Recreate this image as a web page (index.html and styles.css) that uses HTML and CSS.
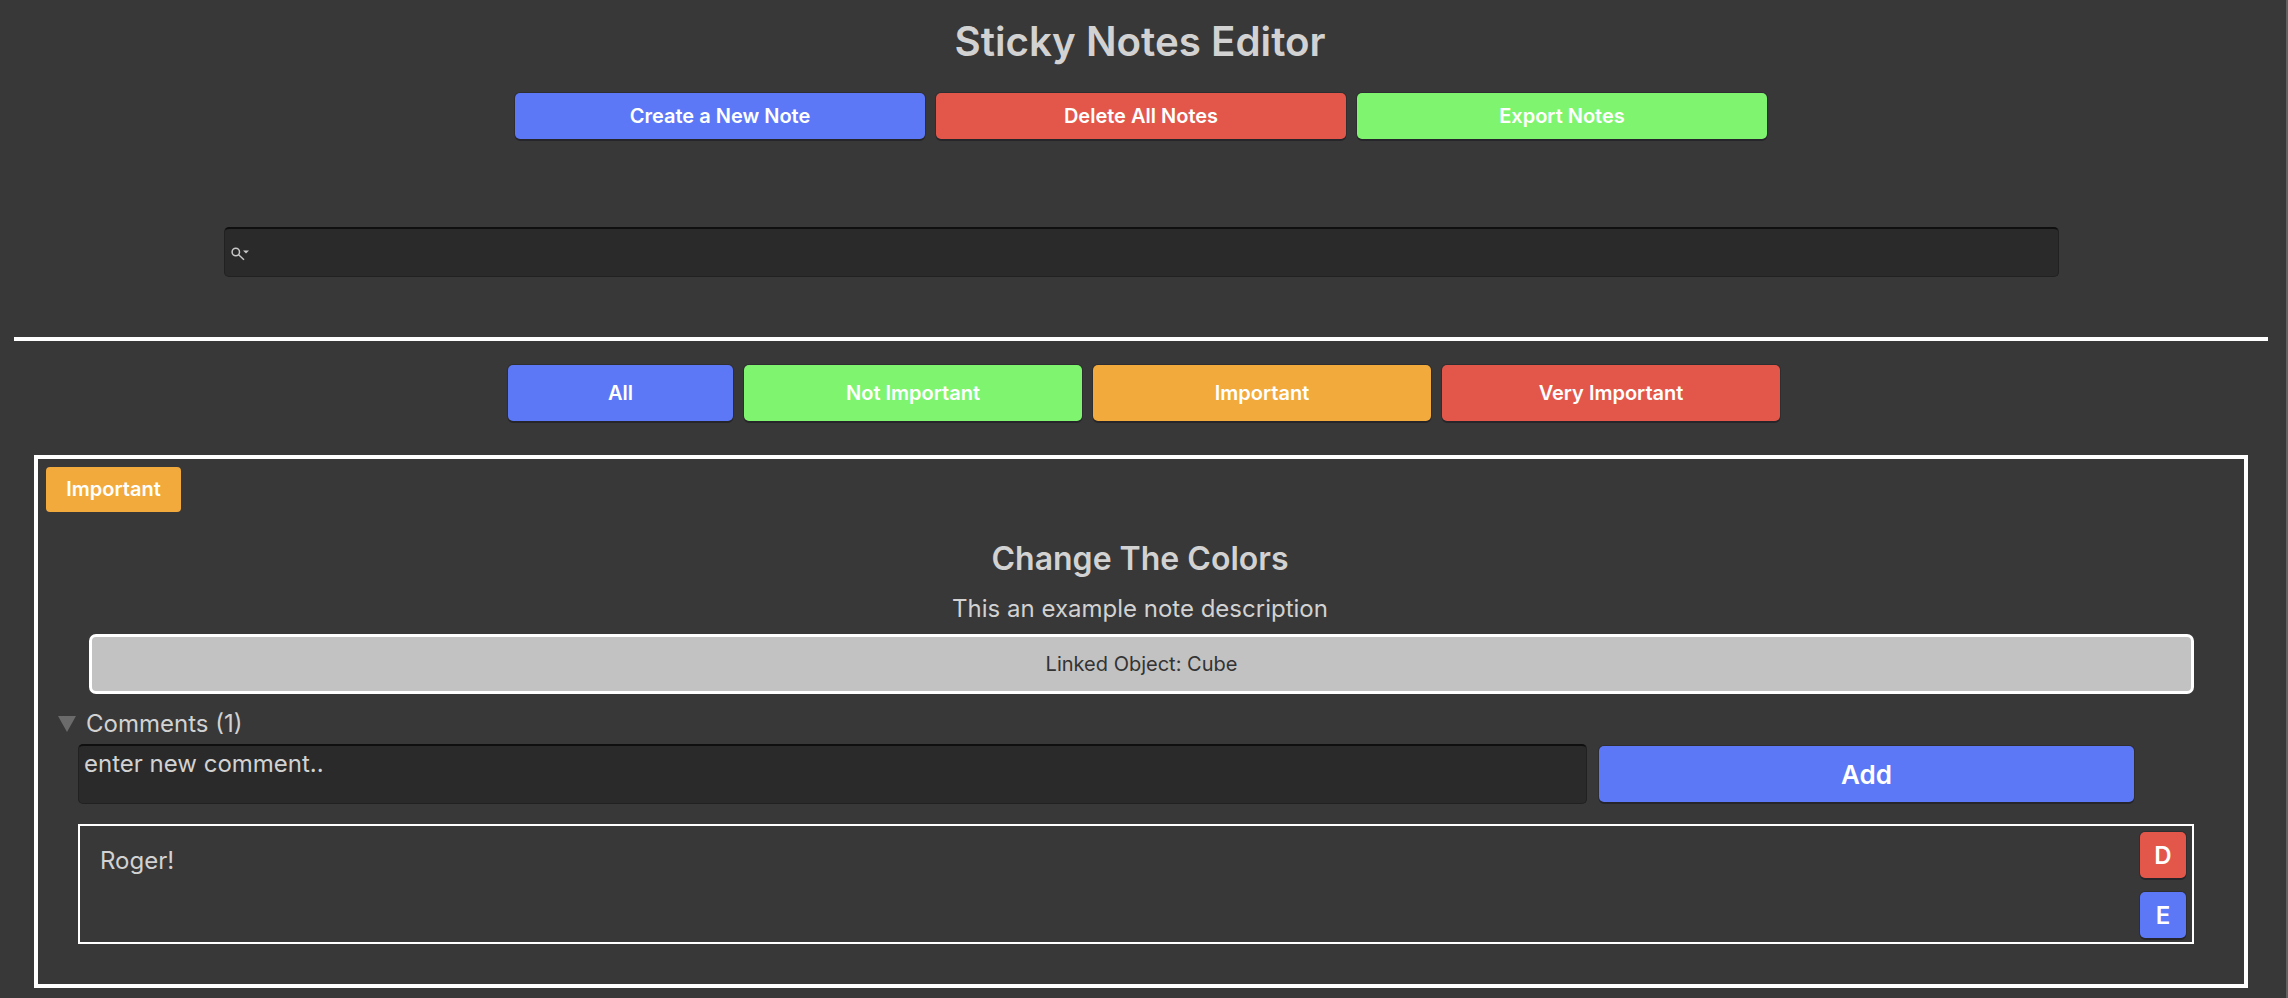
FILE: index.html
```html
<!DOCTYPE html>
<html lang="en">
<head>
  <meta charset="UTF-8">
  <meta name="viewport" content="width=device-width, initial-scale=1.0">
  <title>Sticky Notes Editor</title>
  <link rel="stylesheet" href="styles.css">
</head>
<body>
  <div class="page">
    <h1 class="title">Sticky Notes Editor</h1>

    <div class="actions">
      <button class="button blue action">Create a New Note</button>
      <button class="button red action">Delete All Notes</button>
      <button class="button green action">Export Notes</button>
    </div>

    <div class="search">
      <svg class="search-icon" width="20" height="16" viewBox="0 0 20 16">
        <circle cx="4.8" cy="7" r="3.7" fill="none" stroke="#c8c8c8" stroke-width="1.5"/>
        <path d="M7.6 9.8 L13 14.8" stroke="#c8c8c8" stroke-width="1.5" fill="none"/>
        <path d="M12 5.4 H18 L15 8.6 Z" fill="#c8c8c8"/>
      </svg>
    </div>

    <div class="divider"></div>

    <div class="filters">
      <button class="button blue filter-all">All</button>
      <button class="button green filter">Not Important</button>
      <button class="button orange filter">Important</button>
      <button class="button red filter">Very Important</button>
    </div>

    <div class="note">
      <div class="badge">Important</div>
      <h2 class="note-title">Change The Colors</h2>
      <p class="note-desc">This an example note description</p>
      <div class="linked">Linked Object: Cube</div>

      <div class="comments-head">
        <span class="arrow"></span>
        <span>Comments (1)</span>
      </div>

      <div class="comment-form">
        <div class="comment-input">enter new comment..</div>
        <button class="button blue add">Add</button>
      </div>

      <div class="comment">
        <div class="comment-text">Roger!</div>
        <div class="comment-btns">
          <button class="button red small">D</button>
          <button class="button blue small">E</button>
        </div>
      </div>
    </div>
  </div>
</body>
</html>
```

FILE: styles.css
```css
* {
  box-sizing: border-box;
}
html, body {
  margin: 0;
  height: 100%;
  overflow: hidden;
}
body {
  background-color: #383838;
  color: #d2d2d2;
  font-family: Inter, "Liberation Sans", sans-serif;
}
.page {
  height: 100%;
  padding-right: 4px;
  border-right: 2px solid #606060;
}
.title {
  margin: 0;
  padding: 13px 2px 0 0;
  font-size: 40.3px;
  line-height: 58px;
  font-weight: 600;
  text-align: center;
}
.button {
  border: none;
  border-radius: 5px;
  color: #fff;
  font-family: inherit;
  font-size: 20px;
  font-weight: 600;
  padding: 0;
  box-shadow: 0 2px 0 #26262a, 0 0 0 1px #2e2e30;
  cursor: pointer;
}
.blue {
  background-color: #5c78f6;
}
.red {
  background-color: #e3574b;
}
.green {
  background-color: #7ff56f;
}
.orange {
  background-color: #f2aa3c;
}
.actions {
  display: flex;
  justify-content: center;
  gap: 11px;
  margin-top: 22px;
}
.action {
  width: 410px;
  height: 46px;
}
.search {
  display: flex;
  align-items: center;
  height: 50px;
  margin: 88px 223px 0 224px;
  padding-left: 6px;
  background-color: #2a2a2a;
  border: 1px solid #212121;
  border-top: 2px solid #0f0f0f;
  border-radius: 5px;
}
.divider {
  height: 4px;
  margin: 60px 14px 0;
  background-color: #fff;
}
.filters {
  display: flex;
  justify-content: center;
  gap: 11px;
  margin-top: 24px;
  padding-left: 6px;
}
.filters .button {
  height: 56px;
}
.filter-all {
  width: 225px;
}
.filter {
  width: 338px;
}
.note {
  height: 533px;
  margin: 34px 34px 0;
  padding: 8px 8px 0;
  border: 4px solid #fff;
}
.badge {
  width: 135px;
  height: 45px;
  border-radius: 4px;
  background-color: #f2aa3c;
  color: #fff;
  font-size: 20px;
  font-weight: 600;
  line-height: 45px;
  text-align: center;
}
.note-title {
  margin: 27px 0 0;
  padding-right: 2px;
  font-size: 32px;
  line-height: 40px;
  font-weight: 600;
  text-align: center;
}
.note-desc {
  margin: 14px 0 0;
  padding-right: 2px;
  font-size: 24px;
  line-height: 32px;
  text-align: center;
}
.linked {
  height: 60px;
  margin: 9px 42px 0 43px;
  border: 3px solid #fff;
  border-radius: 7px;
  background-color: #c2c2c2;
  color: #333;
  font-size: 20px;
  line-height: 54px;
  text-align: center;
}
.comments-head {
  display: flex;
  align-items: center;
  gap: 10px;
  margin: 15px 0 0 12px;
  font-size: 24px;
  line-height: 30px;
}
.arrow {
  width: 18px;
  height: 16px;
  background-color: #6b6b6b;
  clip-path: polygon(0 0, 100% 0, 50% 100%);
}
.comment-form {
  display: flex;
  align-items: center;
  gap: 12px;
  margin: 5px 0 0 32px;
}
.comment-input {
  width: 1509px;
  height: 60px;
  padding: 3px 0 0 5px;
  background-color: #2a2a2a;
  border: 1px solid #212121;
  border-top: 2px solid #0f0f0f;
  border-radius: 5px;
  font-size: 24px;
  line-height: 30px;
}
.add {
  width: 535px;
  height: 56px;
  font-size: 26px;
}
.comment {
  display: flex;
  justify-content: space-between;
  height: 120px;
  margin: 20px 42px 0 32px;
  padding: 6px 6px 0 20px;
  border: 2px solid #fff;
}
.comment-text {
  padding-top: 14px;
  font-size: 24px;
  line-height: 30px;
}
.comment-btns {
  display: flex;
  flex-direction: column;
  gap: 14px;
}
.small {
  width: 46px;
  height: 46px;
  font-size: 24px;
}
```
